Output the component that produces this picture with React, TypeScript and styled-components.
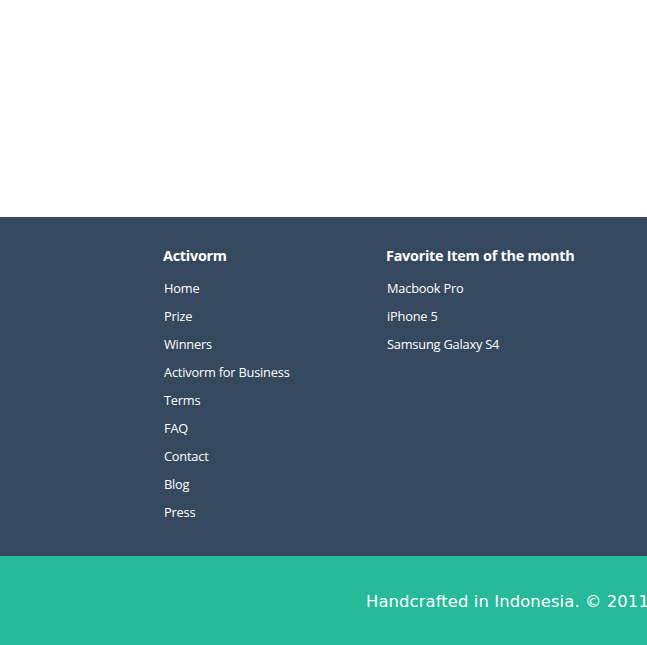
import React from 'react';
import styled, { createGlobalStyle } from 'styled-components';

const GlobalStyle = createGlobalStyle`
  html, body {
    margin: 0;
    padding: 0;
    background: #ffffff;
  }
  * {
    box-sizing: border-box;
  }
`;

const Page = styled.div`
  display: flex;
  flex-direction: column;
  width: 100%;
  overflow: hidden;
`;

const Hero = styled.div`
  height: 217px;
  background: #ffffff;
`;

const Sitemap = styled.footer`
  display: flex;
  background: #34495e;
  padding: 29px 0 30px 163px;
  font-family: 'Open Sans', 'Noto Sans', sans-serif;
  color: #ffffff;
`;

const Column = styled.div<{ $width?: number }>`
  display: flex;
  flex-direction: column;
  width: ${({ $width }) => ($width ? `${$width}px` : 'auto')};
`;

const Heading = styled.h4`
  margin: 0 0 8px;
  font-size: 14.4px;
  line-height: 20px;
  font-weight: 700;
  letter-spacing: -0.25px;
`;

const LinkList = styled.ul`
  list-style: none;
  margin: 0;
  padding: 0 0 0 1px;
`;

const LinkItem = styled.li`
  font-size: 12.8px;
  line-height: 28px;
  letter-spacing: -0.2px;
`;

const Link = styled.a`
  color: #ffffff;
  text-decoration: none;
`;

const Credits = styled.div`
  height: 89px;
  background: #26b99a;
  display: flex;
  align-items: center;
  padding: 2px 0 0 366px;
  white-space: nowrap;
  font-family: 'DejaVu Sans', Verdana, sans-serif;
  font-size: 16.4px;
  letter-spacing: 0.1px;
  color: #ffffff;
`;

const mainLinks = ['Home', 'Prize', 'Winners', 'Activorm for Business', 'Terms', 'FAQ', 'Contact', 'Blog', 'Press'];
const favorites = ['Macbook Pro', 'iPhone 5', 'Samsung Galaxy S4'];

export default function App() {
  return (
    <>
      <GlobalStyle />
      <Page>
        <Hero />
        <Sitemap>
          <Column $width={223}>
            <Heading>Activorm</Heading>
            <LinkList>
              {mainLinks.map((l) => (
                <LinkItem key={l}>
                  <Link href="#">{l}</Link>
                </LinkItem>
              ))}
            </LinkList>
          </Column>
          <Column>
            <Heading>Favorite Item of the month</Heading>
            <LinkList>
              {favorites.map((l) => (
                <LinkItem key={l}>
                  <Link href="#">{l}</Link>
                </LinkItem>
              ))}
            </LinkList>
          </Column>
        </Sitemap>
        <Credits>Handcrafted in Indonesia. © 2011</Credits>
      </Page>
    </>
  );
}
